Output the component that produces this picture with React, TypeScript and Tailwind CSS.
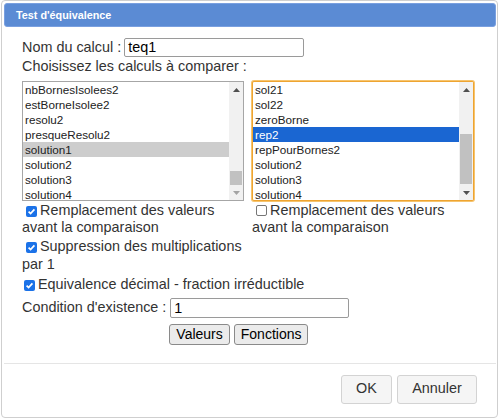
import React from "react"

const leftItems = ["nbBornesIsolees2", "estBorneIsolee2", "resolu2", "presqueResolu2", "solution1", "solution2", "solution3", "solution4"]
const rightItems = ["sol21", "sol22", "zeroBorne", "rep2", "repPourBornes2", "solution2", "solution3", "solution4"]

function Arrow({ up, dim }: { up?: boolean; dim?: boolean }) {
  return (
    <div className="h-[15px] flex items-center justify-center">
      <svg width="7" height="4" viewBox="0 0 7 4">
        <polygon points={up ? "0,4 7,4 3.5,0" : "0,0 7,0 3.5,4"} fill={dim ? "#a3a3a3" : "#505050"} />
      </svg>
    </div>
  )
}

function ListBox({
  items,
  selected,
  focused,
  thumbTop,
  thumbHeight,
}: {
  items: string[]
  selected: number
  focused?: boolean
  thumbTop: number
  thumbHeight: number
}) {
  return (
    <div
      className={
        focused
          ? "w-[222px] h-[120px] flex border border-[#eea431] ring-1 ring-[#f6c46e] rounded-[2px] bg-white overflow-hidden"
          : "w-[222px] h-[120px] flex border border-[#a6a6a6] bg-white overflow-hidden"
      }
    >
      <div className="flex-1 flex flex-col">
        {items.map((it, i) => (
          <div
            key={it + i}
            className={
              i === selected
                ? focused
                  ? "h-[15px] leading-[15px] pl-[2px] text-[11.7px] bg-[#1a66d2] text-white"
                  : "h-[15px] leading-[15px] pl-[2px] text-[11.7px] bg-[#cdcdcd] text-[#222]"
                : "h-[15px] leading-[15px] pl-[2px] text-[11.7px] text-[#222]"
            }
          >
            {it}
          </div>
        ))}
      </div>
      <div className="w-[14px] bg-[#f1f1f1] flex flex-col">
        <Arrow up />
        <div className="flex-1 flex flex-col">
          <div style={{ marginTop: thumbTop, height: thumbHeight }} className="mx-[1px] bg-[#c1c1c1]" />
        </div>
        <Arrow dim={!focused} />
      </div>
    </div>
  )
}

function Box({ checked }: { checked?: boolean }) {
  return checked ? (
    <span className="inline-flex items-center justify-center w-[11px] h-[11px] rounded-[2px] bg-[#1b72e8] align-[-1px] ml-[4px] mr-[3px]">
      <svg width="9" height="9" viewBox="0 0 9 9">
        <path d="M1.6 4.6 L3.6 6.6 L7.4 2.4" stroke="white" strokeWidth="1.7" fill="none" />
      </svg>
    </span>
  ) : (
    <span className="inline-block w-[11px] h-[11px] rounded-[2px] border border-[#767676] bg-white align-[-1px] ml-[4px] mr-[3px]" />
  )
}

export default function App() {
  return (
    <div className="w-[500px] h-[420px] bg-white font-['Liberation_Sans',Arial,sans-serif] text-[#333] pl-[1px]">
      <div className="w-[497px] h-[418px] border border-[#cfcfcf] rounded-[4px] pt-[2px] pl-[2px] pr-[1px] flex flex-col">
        {/* title bar */}
        <div className="h-[24px] bg-[#5b8bd4] border border-[#7aa0e0] rounded-[3px] flex items-center pl-[11px]">
          <span className="text-white font-bold text-[10.8px]">Test d'équivalence</span>
        </div>

        <div className="pl-[18px] pt-[11px] text-[14.4px] pb-[18px]">
          <div className="flex items-center h-[19px]">
            <span className="mr-[3px]">Nom du calcul :</span>
            <div className="w-[180px] h-[19px] border border-[#9a9a9a] rounded-[2px] pl-[3px] leading-[17px] text-black">teq1</div>
          </div>
          <div className="mt-[1px] leading-[17px]">Choisissez les calculs à comparer :</div>

          <div className="mt-[6px] flex gap-[8px]">
            <div className="w-[222px]">
              <ListBox items={leftItems} selected={4} thumbTop={74} thumbHeight={14} />
              <div className="mt-[1px] leading-[17px]">
                <Box checked />Remplacement des valeurs avant la comparaison
              </div>
              <div className="leading-[18px] mt-[1px]">
                <Box checked />Suppression des multiplications par 1
              </div>
            </div>
            <div className="w-[222px]">
              <ListBox items={rightItems} selected={3} focused thumbTop={37} thumbHeight={50} />
              <div className="mt-[1px] leading-[17px]">
                <Box />Remplacement des valeurs avant la comparaison
              </div>
            </div>
          </div>

          <div className="mt-[3px] leading-[17px] -ml-[2px]">
            <Box checked />Equivalence décimal - fraction irréductible
          </div>

          <div className="mt-[4px] grid grid-cols-[auto_1fr] gap-x-[4px] gap-y-[5px] items-center">
            <span>Condition d'existence :</span>
            <div className="w-[179px] h-[20px] border border-[#9a9a9a] rounded-[2px] pl-[3px] leading-[18px] text-black">1</div>
            <span />
            <div className="flex gap-[4px] -ml-[1px]">
              <button className="h-[21px] px-[6px] bg-[#ebebeb] border border-[#8a8a8a] rounded-[3px] text-[14px] text-black leading-[19px]">
                Valeurs
              </button>
              <button className="h-[21px] px-[6px] bg-[#ebebeb] border border-[#8a8a8a] rounded-[3px] text-[14px] text-black leading-[19px]">
                Fonctions
              </button>
            </div>
          </div>
        </div>

        <div className="border-t border-[#e5e5e5] pt-[11px] pr-[19px] flex justify-end gap-[5px]">
          <button className="h-[29px] w-[51px] bg-[#f5f5f5] border border-[#d3d3d3] rounded-[3px] text-[14.4px] text-[#333]">OK</button>
          <button className="h-[29px] w-[80px] bg-[#f5f5f5] border border-[#d3d3d3] rounded-[3px] text-[14.4px] text-[#333]">Annuler</button>
        </div>
      </div>
    </div>
  )
}
